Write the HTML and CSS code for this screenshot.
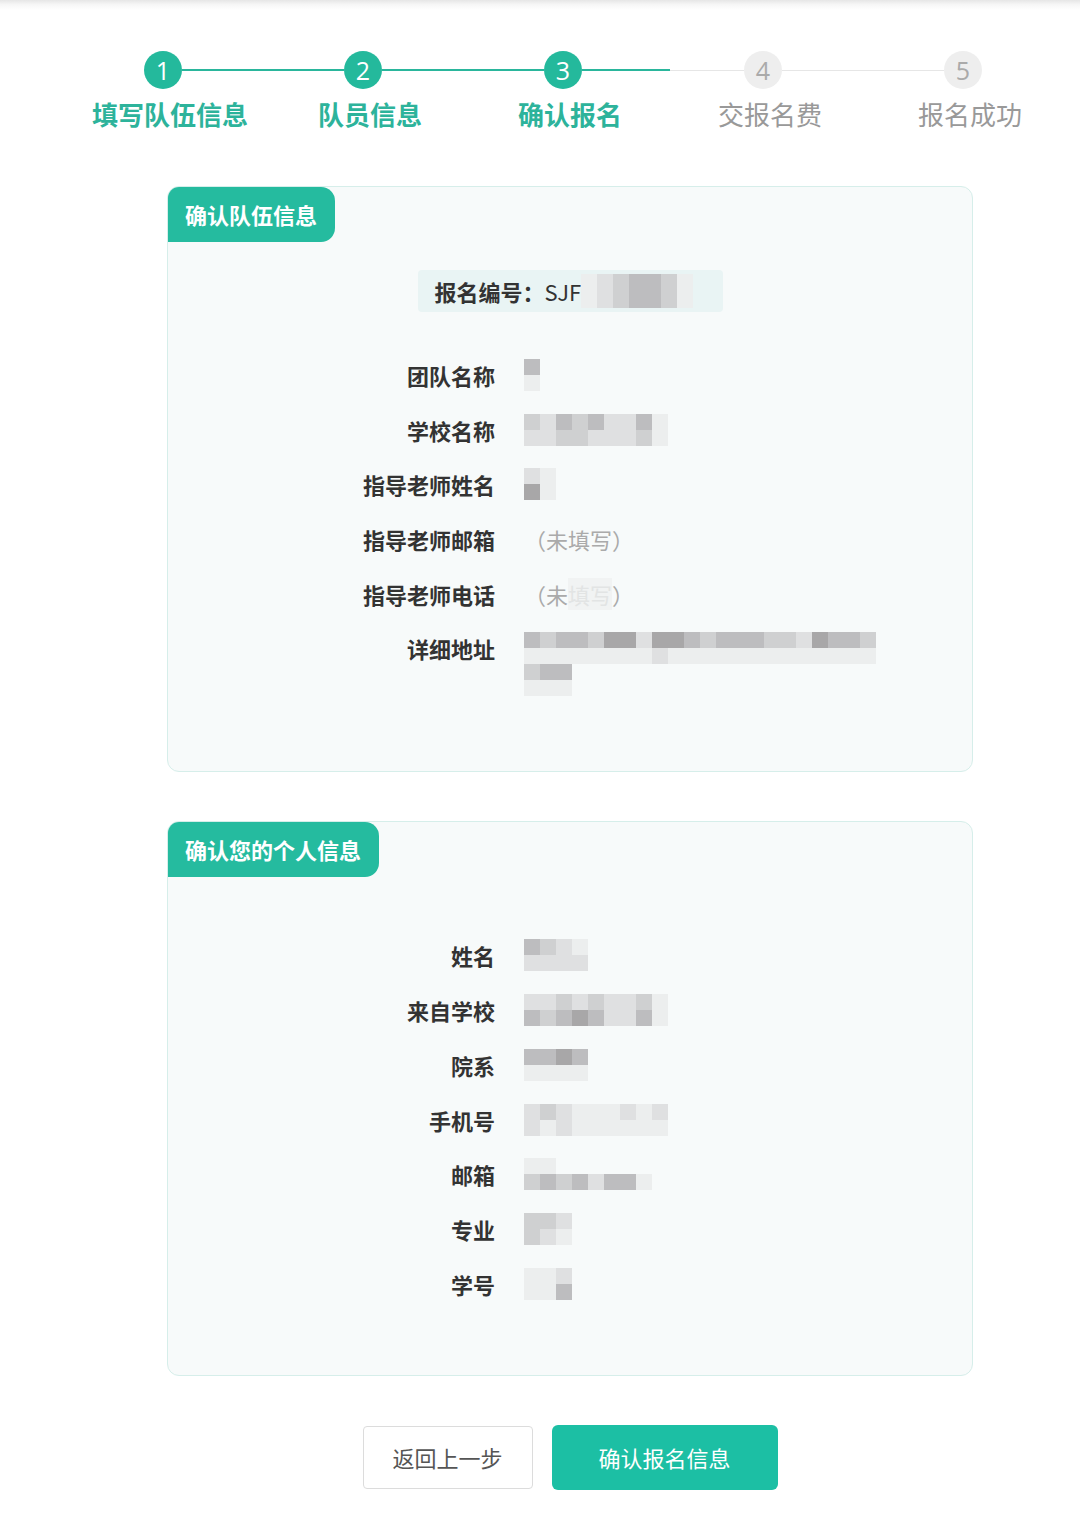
FILE: index.html
```html
<!DOCTYPE html>
<html lang="zh-CN">
<head>
<meta charset="utf-8">
<title>确认报名</title>
<link rel="stylesheet" href="styles.css">
</head>
<body>
<div class="topbar"></div>
<div class="steps">
  <div class="step done">
    <div class="track"><span class="ln ln-l blank"></span><span class="dot">1</span><span class="ln ln-r"></span></div>
    <div class="lbl">填写队伍信息</div>
  </div>
  <div class="step done">
    <div class="track"><span class="ln ln-l"></span><span class="dot">2</span><span class="ln ln-r"></span></div>
    <div class="lbl">队员信息</div>
  </div>
  <div class="step done">
    <div class="track"><span class="ln ln-l"></span><span class="dot">3</span><span class="ln ln-r"></span></div>
    <div class="lbl">确认报名</div>
  </div>
  <div class="step todo">
    <div class="track"><span class="ln ln-l"></span><span class="dot">4</span><span class="ln ln-r"></span></div>
    <div class="lbl">交报名费</div>
  </div>
  <div class="step todo">
    <div class="track"><span class="ln ln-l"></span><span class="dot">5</span><span class="ln ln-r blank"></span></div>
    <div class="lbl">报名成功</div>
  </div>
</div>

<main class="main">
  <section class="card">
    <div class="tab">确认队伍信息</div>
    <div class="card-body">
      <div class="badge-wrap">
        <div class="badge">报名编号：<span class="code">SJF</span><span class="badge-mask"><i class="s1"></i><i class="s2"></i><i class="s3"></i><i class="s4"></i><i class="s4"></i><i class="s3"></i><i class="s1"></i></span></div>
      </div>
      <div class="rows rows-team">
        <div class="row"><div class="k">团队名称</div><div class="px c1"><i class="s4"></i><i class="s1"></i></div></div>
        <div class="row"><div class="k">学校名称</div><div class="px c9">
          <i class="s3"></i><i class="s2"></i><i class="s4"></i><i class="s3"></i><i class="s4"></i><i class="s2"></i><i class="s2"></i><i class="s4"></i><i class="s1"></i>
          <i class="s2"></i><i class="s2"></i><i class="s3"></i><i class="s3"></i><i class="s2"></i><i class="s2"></i><i class="s2"></i><i class="s3"></i><i class="s1"></i>
        </div></div>
        <div class="row"><div class="k">指导老师姓名</div><div class="px c2"><i class="s2"></i><i class="s1"></i><i class="s5"></i><i class="s1"></i></div></div>
        <div class="row"><div class="k">指导老师邮箱</div><div class="v empty">（未填写）</div></div>
        <div class="row"><div class="k">指导老师电话</div><div class="v empty">（未<span class="mask">填写</span>）</div></div>
        <div class="row"><div class="k">详细地址</div><div class="px c22">
          <i class="s4"></i><i class="s3"></i><i class="s4"></i><i class="s4"></i><i class="s3"></i><i class="s5"></i><i class="s5"></i><i class="s2"></i><i class="s5"></i><i class="s5"></i><i class="s4"></i><i class="s3"></i><i class="s4"></i><i class="s4"></i><i class="s4"></i><i class="s3"></i><i class="s3"></i><i class="s2"></i><i class="s5"></i><i class="s4"></i><i class="s4"></i><i class="s3"></i>
          <i class="s1"></i><i class="s1"></i><i class="s1"></i><i class="s1"></i><i class="s1"></i><i class="s1"></i><i class="s1"></i><i class="s1"></i><i class="s2"></i><i class="s1"></i><i class="s1"></i><i class="s1"></i><i class="s1"></i><i class="s1"></i><i class="s1"></i><i class="s1"></i><i class="s1"></i><i class="s1"></i><i class="s1"></i><i class="s1"></i><i class="s1"></i><i class="s1"></i>
          <i class="s3"></i><i class="s4"></i><i class="s4"></i><i class="s0"></i><i class="s0"></i><i class="s0"></i><i class="s0"></i><i class="s0"></i><i class="s0"></i><i class="s0"></i><i class="s0"></i><i class="s0"></i><i class="s0"></i><i class="s0"></i><i class="s0"></i><i class="s0"></i><i class="s0"></i><i class="s0"></i><i class="s0"></i><i class="s0"></i><i class="s0"></i><i class="s0"></i>
          <i class="s1"></i><i class="s1"></i><i class="s1"></i>
        </div></div>
      </div>
    </div>
  </section>

  <section class="card">
    <div class="tab">确认您的个人信息</div>
    <div class="card-body">
      <div class="rows rows-person">
        <div class="row"><div class="k">姓名</div><div class="px c4">
          <i class="s4"></i><i class="s3"></i><i class="s2"></i><i class="s1"></i>
          <i class="s2"></i><i class="s2"></i><i class="s2"></i><i class="s2"></i>
        </div></div>
        <div class="row"><div class="k">来自学校</div><div class="px c9">
          <i class="s2"></i><i class="s2"></i><i class="s3"></i><i class="s2"></i><i class="s3"></i><i class="s2"></i><i class="s2"></i><i class="s3"></i><i class="s1"></i>
          <i class="s4"></i><i class="s3"></i><i class="s4"></i><i class="s5"></i><i class="s4"></i><i class="s2"></i><i class="s2"></i><i class="s4"></i><i class="s1"></i>
        </div></div>
        <div class="row"><div class="k">院系</div><div class="px c4">
          <i class="s4"></i><i class="s4"></i><i class="s5"></i><i class="s4"></i>
          <i class="s1"></i><i class="s1"></i><i class="s1"></i><i class="s1"></i>
        </div></div>
        <div class="row"><div class="k">手机号</div><div class="px c9">
          <i class="s2"></i><i class="s3"></i><i class="s2"></i><i class="s1"></i><i class="s1"></i><i class="s1"></i><i class="s2"></i><i class="s1"></i><i class="s2"></i>
          <i class="s2"></i><i class="s1"></i><i class="s2"></i><i class="s1"></i><i class="s1"></i><i class="s1"></i><i class="s1"></i><i class="s1"></i><i class="s1"></i>
        </div></div>
        <div class="row"><div class="k">邮箱</div><div class="px c8">
          <i class="s1"></i><i class="s1"></i><i class="s0"></i><i class="s0"></i><i class="s0"></i><i class="s0"></i><i class="s0"></i><i class="s0"></i>
          <i class="s3"></i><i class="s4"></i><i class="s3"></i><i class="s4"></i><i class="s2"></i><i class="s4"></i><i class="s4"></i><i class="s1"></i>
        </div></div>
        <div class="row"><div class="k">专业</div><div class="px c3">
          <i class="s3"></i><i class="s3"></i><i class="s2"></i>
          <i class="s3"></i><i class="s2"></i><i class="s1"></i>
        </div></div>
        <div class="row"><div class="k">学号</div><div class="px c3">
          <i class="s1"></i><i class="s1"></i><i class="s2"></i>
          <i class="s1"></i><i class="s1"></i><i class="s4"></i>
        </div></div>
      </div>
    </div>
  </section>

  <div class="actions">
    <button class="btn btn-back">返回上一步</button>
    <button class="btn btn-ok">确认报名信息</button>
  </div>
</main>
</body>
</html>
```

FILE: styles.css
```css
* { box-sizing: border-box; }

body {
  margin: 0;
  background: #ffffff;
  font-family: "Noto Sans CJK SC", "Noto Sans", "Liberation Sans", sans-serif;
  color: #333333;
}

.topbar {
  height: 10px;
  background: linear-gradient(to bottom, #e6e6e6 0%, #f6f6f6 45%, #ffffff 100%);
}

/* ---------- steps ---------- */
.steps {
  display: flex;
  padding-left: 70px;
  margin-top: 41px;
}

.step {
  width: 200px;
  display: flex;
  flex-direction: column;
  align-items: center;
}

.track {
  display: flex;
  align-items: center;
  width: 200px;
  height: 38px;
}

.ln {
  display: block;
  height: 2px;
  background: #2ab69c;
}
.ln-l { width: 74px; }
.ln-r { width: 88px; }
.ln.blank { background: transparent; }

.dot {
  width: 38px;
  height: 38px;
  border-radius: 50%;
  background: #24b99c;
  color: #ffffff;
  font-family: "Open Sans", "Noto Sans", sans-serif;
  font-size: 25px;
  line-height: 38px;
  text-align: center;
  flex: none;
}

.todo .ln { background: #e6e6e6; height: 1px; }
.todo .ln.blank { background: transparent; }
.todo .dot { background: #eeeeee; color: #aaaaaa; }

.lbl {
  margin-top: 9px;
  font-size: 26px;
  line-height: 32px;
  font-weight: 700;
  color: #2db39b;
  white-space: nowrap;
}
.todo .lbl {
  font-weight: 400;
  color: #999999;
}

/* ---------- cards ---------- */
.main {
  width: 806px;
  margin-left: 167px;
  margin-top: 56px;
}

.card {
  background: #f7fafa;
  border: 1px solid #d6eeea;
  border-radius: 12px;
  overflow: hidden;
  margin-bottom: 49px;
}

.tab {
  display: inline-block;
  height: 55px;
  line-height: 55px;
  padding: 0 18px 0 17px;
  background: #25bb9f;
  color: #ffffff;
  font-size: 22px;
  font-weight: 700;
  border-radius: 0 14px 14px 0;
}

.card-body {
  padding-bottom: 75px;
}

.badge-wrap {
  display: flex;
  justify-content: center;
  padding-top: 28px;
}

.badge {
  display: flex;
  align-items: center;
  width: 305px;
  height: 42px;
  padding-left: 17px;
  background: #e9f4f4;
  border-radius: 4px;
  font-size: 22px;
  font-weight: 700;
  color: #333333;
  white-space: nowrap;
}

.code { font-weight: 400; }

.badge-mask {
  display: inline-flex;
  margin-left: 0;
  height: 34px;
  align-items: stretch;
}
.badge-mask i { width: 16px; display: block; }

.rows {
  display: flex;
  flex-direction: column;
  gap: 22.7px;
}
.rows-team { margin-top: 47px; }
.rows-person { margin-top: 62px; }

.row {
  display: grid;
  grid-template-columns: 327px 1fr;
  column-gap: 29px;
  align-items: start;
}

.k {
  text-align: right;
  font-size: 22px;
  line-height: 32px;
  font-weight: 700;
  color: #333333;
}

.v {
  font-size: 22px;
  line-height: 32px;
}
.empty { color: #aaaaaa; }
.mask {
  background: #f1f3f3;
  color: #e2e4e4;
}

/* pixelated (redacted) values */
.px {
  display: grid;
  grid-auto-rows: 16px;
  justify-content: start;
}
.px i { display: block; width: 16px; height: 16px; }
.c1 { grid-template-columns: repeat(1, 16px); }
.c2 { grid-template-columns: repeat(2, 16px); }
.c3 { grid-template-columns: repeat(3, 16px); }
.c4 { grid-template-columns: repeat(4, 16px); }
.c8 { grid-template-columns: repeat(8, 16px); }
.c9 { grid-template-columns: repeat(9, 16px); }
.c22 { grid-template-columns: repeat(22, 16px); }

.s0 { background: transparent; }
.s1 { background: #eceeee; }
.s2 { background: #dfe0e1; }
.s3 { background: #cfd0d1; }
.s4 { background: #bdbdbf; }
.s5 { background: #a8a7a8; }

/* ---------- actions ---------- */
.actions {
  display: flex;
  justify-content: center;
  align-items: center;
  gap: 19px;
  margin-top: 0;
}

.btn {
  font-family: "Noto Sans CJK SC", "Noto Sans", sans-serif;
  font-size: 22px;
  cursor: pointer;
}

.btn-back {
  width: 170px;
  height: 63px;
  background: #ffffff;
  border: 1px solid #dcdcdc;
  border-radius: 4px;
  color: #555555;
}

.btn-ok {
  width: 226px;
  height: 65px;
  background: #1cbfa4;
  border: none;
  border-radius: 6px;
  color: #ffffff;
}
```
